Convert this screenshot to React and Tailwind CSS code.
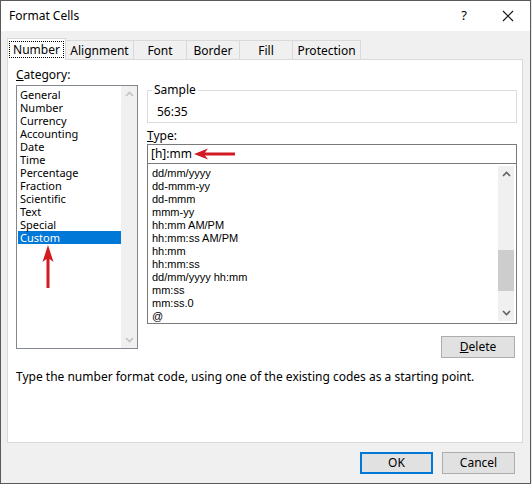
import React from 'react'

const font = { fontFamily: '"Segoe UI", "Noto Sans", sans-serif' }

const categories = ['General', 'Number', 'Currency', 'Accounting', 'Date', 'Time', 'Percentage', 'Fraction', 'Scientific', 'Text', 'Special', 'Custom']
const formats = ['dd/mm/yyyy', 'dd-mmm-yy', 'dd-mmm', 'mmm-yy', 'hh:mm AM/PM', 'hh:mm:ss AM/PM', 'hh:mm', 'hh:mm:ss', 'dd/mm/yyyy hh:mm', 'mm:ss', 'mm:ss.0', '@']
const tabs = [
  ['Alignment', 'w-[68px]'],
  ['Font', 'w-[53px]'],
  ['Border', 'w-[53px]'],
  ['Fill', 'w-[53px]'],
  ['Protection', 'w-[68px]'],
]

function Chevron({ up, className = '' }) {
  return (
    <svg width="9" height="6" viewBox="0 0 9 6" className={className}>
      <path d={up ? 'M1 5 L4.5 1.5 L8 5' : 'M1 1 L4.5 4.5 L8 1'} fill="none" stroke="currentColor" strokeWidth="1.6" />
    </svg>
  )
}

export default function App() {
  return (
    <div className="w-[532px] h-[484px] bg-[#e8e8e8] text-[12px] text-black" style={font}>
      <div className="w-[531px] h-[484px] border border-[#5a5a5a] bg-[#f0f0f0] flex flex-col">
        {/* title bar */}
        <div className="h-[30px] bg-white flex items-center pl-2 shrink-0">
          <span className="flex-1 text-[12px]">Format Cells</span>
          <span className="w-[20px] text-center text-[13px]">?</span>
          <svg width="12" height="12" viewBox="0 0 12 12" className="ml-[28px] mr-[16px]">
            <path d="M1 1 L11 11 M11 1 L1 11" stroke="#111" strokeWidth="1.1" />
          </svg>
        </div>

        {/* tabs */}
        <div className="flex items-end h-[28px] pl-[6px] shrink-0">
          <div className="w-[59px] h-[22px] bg-white border border-b-0 border-[#d9d9d9] flex items-center justify-center relative z-10 -mb-px">
            <span className="border border-dotted border-black px-[3px] leading-[15px]">Number</span>
          </div>
          {tabs.map(([t, w]) => (
            <div key={t} className={`${w} h-[19px] pt-[1px] border border-l-0 border-b-0 border-[#d9d9d9] flex items-center justify-center`}>
              {t}
            </div>
          ))}
        </div>

        {/* panel */}
        <div className="mx-[6px] w-[516px] h-[384px] bg-white border border-[#d9d9d9] shrink-0 flex flex-col">
          <div className="flex pt-[6px]">
            {/* category column */}
            <div className="pl-[8px] w-[139px] shrink-0">
              <div className="leading-[18px]"><span className="underline">C</span>ategory:</div>
              <div className="mt-px w-[122px] h-[264px] border border-[#828790] flex">
                <div className="flex-1 pt-[2px] pl-[1px] text-[11px]">
                  {categories.map((c) => (
                    <div
                      key={c}
                      className={`h-[13px] leading-[13px] pl-[2px] ${c === 'Custom' ? 'bg-[#0078d7] text-white' : ''}`}
                    >
                      {c}
                    </div>
                  ))}
                  <svg width="12" height="44" viewBox="0 0 12 44" className="ml-[24px] mt-[1px]">
                    <path d="M6 0 L11.5 17 L7.5 14 L7.5 43 L4.5 43 L4.5 14 L0.5 17 Z" fill="#d11a22" />
                  </svg>
                </div>
                <div className="w-[16px] bg-[#f0f0f0] flex flex-col justify-between items-center py-[5px] text-[#c3c3c3]">
                  <Chevron up />
                  <Chevron />
                </div>
              </div>
            </div>

            {/* right column */}
            <div className="w-[370px] shrink-0 pt-[24px]">
              <div className="relative h-[33px] border border-[#dcdcdc]">
                <span className="absolute -top-[9px] left-[4px] bg-white px-[2px] leading-[16px]">Sample</span>
                <div className="pl-[9px] pt-[13px] leading-[16px]">56:35</div>
              </div>
              <div className="mt-[5px] leading-[16px]"><span className="underline">T</span>ype:</div>
              <div className="h-[20px] border border-[#7a7a7a] flex items-center pl-[3px]">
                <span>[h]:mm</span>
                <svg width="42" height="12" viewBox="0 0 42 12" className="ml-[2px]">
                  <path d="M0 6 L14 0.5 L11 4.5 L41 4.5 L41 7.5 L11 7.5 L14 11.5 Z" fill="#d11a22" />
                </svg>
              </div>
              <div
                className="h-[160px] border border-[#7a7a7a] border-t-0 flex"
                style={{ fontFamily: '"Liberation Sans", Arial, sans-serif' }}
              >
                <div className="flex-1 pt-[3px] pl-[4px] text-[11px]">
                  {formats.map((f) => (
                    <div key={f} className="h-[13px] leading-[13px]">{f}</div>
                  ))}
                </div>
                <div className="w-[16px] my-[2px] mr-[2px] bg-[#f0f0f0] flex flex-col items-center text-[#606060]">
                  <Chevron up className="mt-[5px]" />
                  <div className="flex-1 w-full">
                    <div className="mt-[73px] h-[41px] w-full bg-[#cdcdcd]" />
                  </div>
                  <Chevron className="mb-[5px]" />
                </div>
              </div>
              <div className="flex justify-end mt-[12px] pr-[2px]">
                <button className="w-[74px] h-[22px] bg-[#e1e1e1] border border-[#adadad] leading-none">
                  <span className="underline">D</span>elete
                </button>
              </div>
            </div>
          </div>
          <div className="pl-[8px] mt-[11px] leading-[16px]">
            Type the number format code, using one of the existing codes as a starting point.
          </div>
        </div>

        {/* buttons */}
        <div className="flex justify-end gap-[9px] pr-[15px] mt-[9px]">
          <button className="w-[73px] h-[22px] bg-[#e1e1e1] border-2 border-[#0078d7] leading-none">OK</button>
          <button className="w-[73px] h-[22px] bg-[#e1e1e1] border border-[#adadad] leading-none">Cancel</button>
        </div>
      </div>
    </div>
  )
}
